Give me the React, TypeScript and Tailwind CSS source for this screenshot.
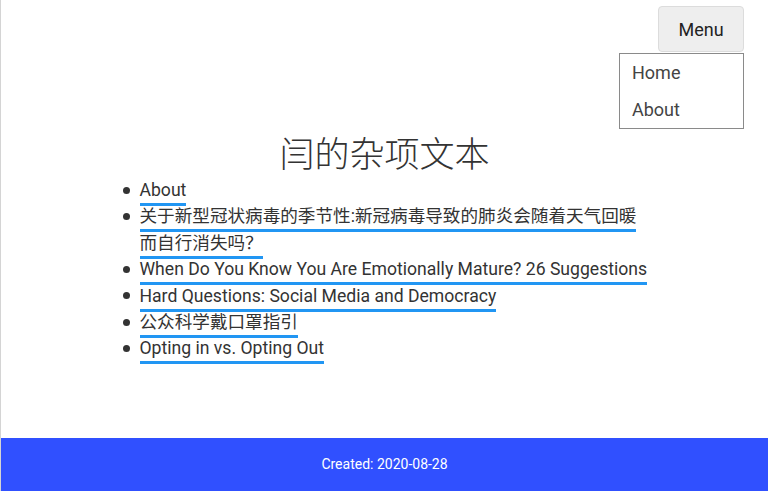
import React from "react";

const items = [
  "About",
  "关于新型冠状病毒的季节性:新冠病毒导致的肺炎会随着天气回暖而自行消失吗？",
  "When Do You Know You Are Emotionally Mature? 26 Suggestions",
  "Hard Questions: Social Media and Democracy",
  "公众科学戴口罩指引",
  "Opting in vs. Opting Out",
];

export default function App() {
  return (
    <div
      className="relative flex min-h-screen flex-col border-l border-[#d4d4d4] bg-white text-[#333]"
      style={{ fontFamily: 'Roboto, "Noto Sans CJK SC", sans-serif' }}
    >
      <header className="relative flex h-[136px] justify-end pr-[24px] pt-[6px]">
        <div className="relative">
          <button className="h-[46px] w-[86px] rounded-[4px] border border-[#dcdcdc] bg-[#eeeeee] text-[18px] text-[#222]">
            Menu
          </button>
          <div className="absolute right-0 top-[47px] flex w-[125px] flex-col border border-[#8a8a8a] bg-white text-[18px] text-[#444]">
            <a className="block h-[37px] pl-[12px] leading-[37px]">Home</a>
            <a className="block h-[37px] pl-[12px] leading-[37px]">About</a>
          </div>
        </div>
      </header>
      <main className="flex-1">
        <h1 className="-mt-px text-center text-[35px] font-light leading-[42px] text-[#333]">
          闫的杂项文本
        </h1>
        <div className="mx-auto w-[540px]">
          <ul className="list-none pl-[25px] pr-[4px] text-[17.6px] leading-[26.4px] text-[#333]">
            {items.map((t) => (
              <li
                key={t}
                className="relative before:absolute before:left-[-17px] before:top-[9.5px] before:h-[7px] before:w-[7px] before:rounded-full before:bg-[#333] before:content-['']"
              >
                <a className="border-b-[3px] border-[#2196f3] pb-[3px]">{t}</a>
              </li>
            ))}
          </ul>
        </div>
      </main>
      <footer className="flex h-[53px] items-center justify-center bg-[#3050ff] text-[14px] text-white">
        Created: 2020-08-28
      </footer>
    </div>
  );
}
